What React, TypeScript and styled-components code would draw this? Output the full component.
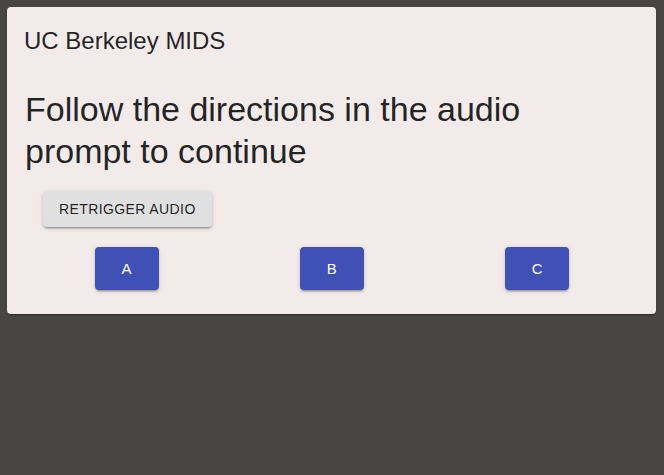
import React from "react";
import styled, { createGlobalStyle } from "styled-components";

const Global = createGlobalStyle`
  html, body { margin: 0; padding: 0; background: #4a4545; height: 100%; }
  body { font-family: "Liberation Sans", Arial, sans-serif; }
  #root { min-height: 100vh; }
`;

const Page = styled.div`
  padding: 7px 8px 7px 7px;
  box-sizing: border-box;
`;

const Card = styled.div`
  background: #f3eaea;
  border-radius: 4px;
  box-shadow: 0 2px 1px -1px rgba(0,0,0,0.2), 0 1px 1px 0 rgba(0,0,0,0.14), 0 1px 3px 0 rgba(0,0,0,0.12);
  padding: 18px 16px 24px 17px;
  color: rgba(0,0,0,0.87);
  display: flex;
  flex-direction: column;
`;

const Title = styled.h5`
  margin: 0;
  font-size: 24px;
  font-weight: 400;
  line-height: 32px;
`;

const Heading = styled.h4`
  margin: 31px 0 0;
  font-size: 34px;
  font-weight: 400;
  line-height: 42px;
  padding-left: 1px;
`;

const RetriggerRow = styled.div`
  margin-top: 19px;
  padding-left: 19px;
  display: flex;
`;

const Button = styled.button<{ $primary?: boolean }>`
  border: 0;
  border-radius: 4px;
  cursor: pointer;
  font-family: "Liberation Sans", Arial, sans-serif;
  text-transform: uppercase;
  min-width: 64px;
  box-shadow: 0 3px 1px -2px rgba(0,0,0,0.2), 0 2px 2px 0 rgba(0,0,0,0.14), 0 1px 5px 0 rgba(0,0,0,0.12);
  background: ${(p) => (p.$primary ? "#3f51b5" : "#e0e0e0")};
  color: ${(p) => (p.$primary ? "#ffffff" : "rgba(0,0,0,0.87)")};
  font-size: ${(p) => (p.$primary ? "15px" : "14px")};
  letter-spacing: 0.4px;
  line-height: ${(p) => (p.$primary ? "27px" : "24px")};
  padding: ${(p) => (p.$primary ? "8px 22px" : "6px 16px")};
`;

const ChoiceRow = styled.div`
  margin-top: 20px;
  display: grid;
  grid-template-columns: repeat(3, 1fr);
  justify-items: center;
`;

export default function App() {
  return (
    <>
      <Global />
      <Page>
        <Card>
          <Title>UC Berkeley MIDS</Title>
          <Heading>
            Follow the directions in the audio
            <br />
            prompt to continue
          </Heading>
          <RetriggerRow>
            <Button>Retrigger Audio</Button>
          </RetriggerRow>
          <ChoiceRow>
            <Button $primary>A</Button>
            <Button $primary>B</Button>
            <Button $primary>C</Button>
          </ChoiceRow>
        </Card>
      </Page>
    </>
  );
}
